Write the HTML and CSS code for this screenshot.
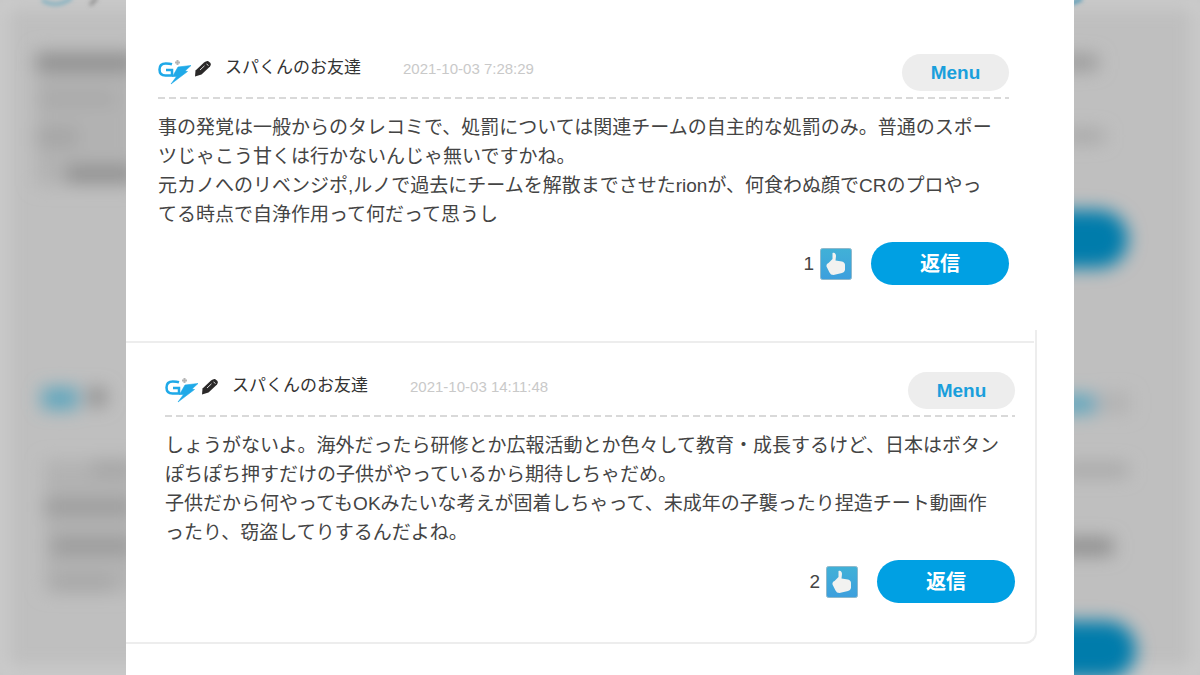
FILE: index.html
```html
<!DOCTYPE html>
<html lang="ja">
<head>
<meta charset="utf-8">
<meta name="viewport" content="width=device-width, initial-scale=1">
<title>コメント</title>
<link rel="stylesheet" href="styles.css">
</head>
<body>
<svg class="backdrop" viewBox="0 0 1200 675" preserveAspectRatio="none" aria-hidden="true">
  <defs>
    <filter id="soft" x="-50%" y="-100%" width="200%" height="300%"><feGaussianBlur stdDeviation="9"/></filter>
    <filter id="edge" x="-50%" y="-100%" width="200%" height="300%"><feGaussianBlur stdDeviation="2"/></filter>
  </defs>
  <rect width="1200" height="675" fill="#bfbfbf"/>
  <rect width="1200" height="675" fill="none" stroke="#d0d0d0" stroke-width="12" filter="url(#soft)"/>
  <g filter="url(#soft)">
    <g fill="#b2b2b2">
      <rect x="36" y="50" width="100" height="136"/>
      <rect x="44" y="460" width="92" height="132"/>
    </g>
    <g fill="#8c8c8c">
      <rect x="36" y="54" width="100" height="17"/>
      <rect x="66" y="166" width="70" height="16"/>
      <rect x="1060" y="538" width="53" height="17"/>
      <rect x="88" y="388" width="18" height="18"/>
    </g>
    <g fill="#989898">
      <rect x="44" y="500" width="92" height="14"/>
      <rect x="52" y="538" width="84" height="16"/>
      <rect x="1060" y="55" width="38" height="15"/>
    </g>
    <g fill="#a4a4a4">
      <rect x="38" y="94" width="78" height="10"/>
      <rect x="36" y="128" width="42" height="18"/>
      <rect x="92" y="460" width="44" height="16"/>
      <rect x="52" y="577" width="62" height="14"/>
      <rect x="1060" y="130" width="44" height="12"/>
      <rect x="1060" y="464" width="68" height="12"/>
    </g>
    <rect x="1100" y="393" width="30" height="20" fill="#b2b2b2"/>
    <rect x="42" y="388" width="36" height="21" fill="#5ca5bd"/>
    <rect x="1050" y="395" width="47" height="18" fill="#5ca5bd"/>
    <rect x="950" y="210" width="178" height="58" rx="29" fill="#007bab"/>
    <rect x="950" y="621" width="186" height="58" rx="29" fill="#007bab"/>
  </g>
  <g filter="url(#edge)" fill="none" stroke-width="3">
    <path d="M42 0q14 9 30 -2" stroke="#76adc0"/>
    <path d="M90 5l7 -7" stroke="#858585"/>
    <path d="M1070 4l12 -5" stroke="#3a91b4"/>
  </g>
</svg>

<svg class="symbols" aria-hidden="true">
  <defs>
    <linearGradient id="sky" x1="0" y1="0" x2="0" y2="1"><stop offset="0" stop-color="#41b1d7"/><stop offset="1" stop-color="#3d9fdd"/></linearGradient>
  </defs>
  <symbol id="logo" viewBox="0 0 34 26">
    <path d="M14 5.200C12.500 4.700 10.500 4.500 7.800 4.500C3.500 4.500 1.500 6.500 1.500 10.500C1.500 14.800 3.500 16.500 7.500 16.500H14V11H8" fill="none" stroke="#1fa9e8" stroke-width="2.500"/>
    <path d="M20 8L33 6.500L27 12L29.500 12.500L13 25L18.500 17.500H14.500Z" fill="#1fa9e8" stroke="#1fa9e8" stroke-width=".6"/>
    <path d="M19.500 1v5M17 3.500h5" stroke="#b5b5b5" stroke-width="2"/>
  </symbol>
  <symbol id="pencil" viewBox="0 0 18 18">
    <path d="M1 16.500L1.500 10.500L10 2.500Q12 .8 14 1L16.500 3Q17.500 4.500 16 6.500L7.500 14.500Z" fill="#2b2929"/>
    <path d="M6 10L10.500 5.800M12.500 4L14.500 5.500" stroke="#ddd" stroke-width="1"/>
  </symbol>
  <symbol id="thumb" viewBox="0 0 32 32">
    <rect x=".5" y=".5" width="31" height="31" rx="2" fill="url(#sky)" stroke="#8fb9cc"/>
    <path d="M12.500 5C14.500 4 16 5.500 16 8L15.500 12.500L22 13.500Q25 14.500 25 17V22Q24.500 24.500 22 25L13.500 27Q10.500 27 9.500 24.500L6.500 18.500Q6 16 8.500 15L12.500 11Z" fill="#f2f2f0"/>
  </symbol>
</svg>

<main class="panel">
  <article class="post">
    <header class="post-head">
      <svg class="logo" role="img" aria-label="G"><use href="#logo"/></svg>
      <svg class="pencil" aria-hidden="true"><use href="#pencil"/></svg>
      <span class="name">スパくんのお友達</span>
      <time class="date" datetime="2021-10-03T07:28:29">2021-10-03 7:28:29</time>
      <button class="menu" type="button">Menu</button>
    </header>
    <p class="body">事の発覚は一般からのタレコミで、処罰については関連チームの自主的な処罰のみ。普通のスポー<br>ツじゃこう甘くは行かないんじゃ無いですかね。<br>元カノへのリベンジポ,ルノで過去にチームを解散までさせたrionが、何食わぬ顔でCRのプロやっ<br>てる時点で自浄作用って何だって思うし</p>
    <footer class="actions">
      <span class="count">1</span>
      <button class="like" type="button" aria-label="いいね"><svg><use href="#thumb"/></svg></button>
      <button class="reply" type="button">返信</button>
    </footer>
  </article>

  <section class="thread">
    <article class="post nested">
      <header class="post-head">
        <svg class="logo" role="img" aria-label="G"><use href="#logo"/></svg>
        <svg class="pencil" aria-hidden="true"><use href="#pencil"/></svg>
        <span class="name">スパくんのお友達</span>
        <time class="date" datetime="2021-10-03T14:11:48">2021-10-03 14:11:48</time>
        <button class="menu" type="button">Menu</button>
      </header>
      <p class="body">しょうがないよ。海外だったら研修とか広報活動とか色々して教育・成長するけど、日本はボタン<br>ぽちぽち押すだけの子供がやっているから期待しちゃだめ。<br>子供だから何やってもOKみたいな考えが固着しちゃって、未成年の子襲ったり捏造チート動画作<br>ったり、窃盗してりするんだよね。</p>
      <footer class="actions">
        <span class="count">2</span>
        <button class="like" type="button" aria-label="いいね"><svg><use href="#thumb"/></svg></button>
        <button class="reply" type="button">返信</button>
      </footer>
    </article>
  </section>
</main>
</body>
</html>
```
FILE: styles.css
```css
* { box-sizing: border-box; }
body {
  margin: 0;
  background: #bfbfbf;
  color: #444;
  font-family: "Liberation Sans", "Noto Sans CJK JP", sans-serif;
}
.backdrop {
  position: fixed;
  inset: 0;
  width: 100%;
  height: 100%;
  z-index: -1;
}
.symbols {
  position: absolute;
  width: 0;
  height: 0;
}
.panel {
  width: 79%;
  min-height: 100vh;
  margin: 0 auto;
  background: #fff;
}
.post { padding: 54px 65px 45px 32px; }
.post-head {
  display: flex;
  align-items: center;
  padding-bottom: 8px;
  background: repeating-linear-gradient(to right, #d9d9d9 0 7px, transparent 7px 11px) bottom / 100% 2px no-repeat;
}
.logo { width: 34px; height: 26px; margin-bottom: 2px; }
.pencil { width: 18px; height: 18px; margin: 0 0 8px 2px; }
.name {
  margin-left: 13px;
  padding-bottom: 10px;
  color: #333;
  font-size: 17px;
  line-height: 24px;
  white-space: nowrap;
}
.date {
  margin-left: 42px;
  padding-bottom: 8px;
  color: #c9c9c9;
  font-size: 15px;
  line-height: 24px;
}
button {
  border: 0;
  padding: 0;
  font-family: inherit;
  font-weight: bold;
  cursor: pointer;
}
.menu {
  width: 107px;
  height: 37px;
  margin-left: auto;
  border-radius: 19px;
  background: #ededed;
  color: #1a9fdc;
  font-size: 19px;
}
.body {
  margin: 14px 0 13px;
  font-size: 19px;
  line-height: 29px;
}
.actions {
  display: flex;
  justify-content: flex-end;
  align-items: center;
}
.count { font-size: 19px; }
.like { margin: 0 19px 0 6px; background: none; }
.like svg { display: block; width: 32px; height: 32px; }
.reply {
  width: 138px;
  height: 43px;
  padding-bottom: 3px;
  border-radius: 22px;
  background: #00a0e3;
  color: #fff;
  font-size: 20px;
}
.thread {
  margin-right: 37px;
  padding: 11px 1px 0 0;
  border: solid #ededed;
  border-width: 0 2px 2px 0;
  border-bottom-right-radius: 12px;
}
.nested {
  padding: 29px 19px 39px 39px;
  border-top: 2px solid #ededed;
}
```
